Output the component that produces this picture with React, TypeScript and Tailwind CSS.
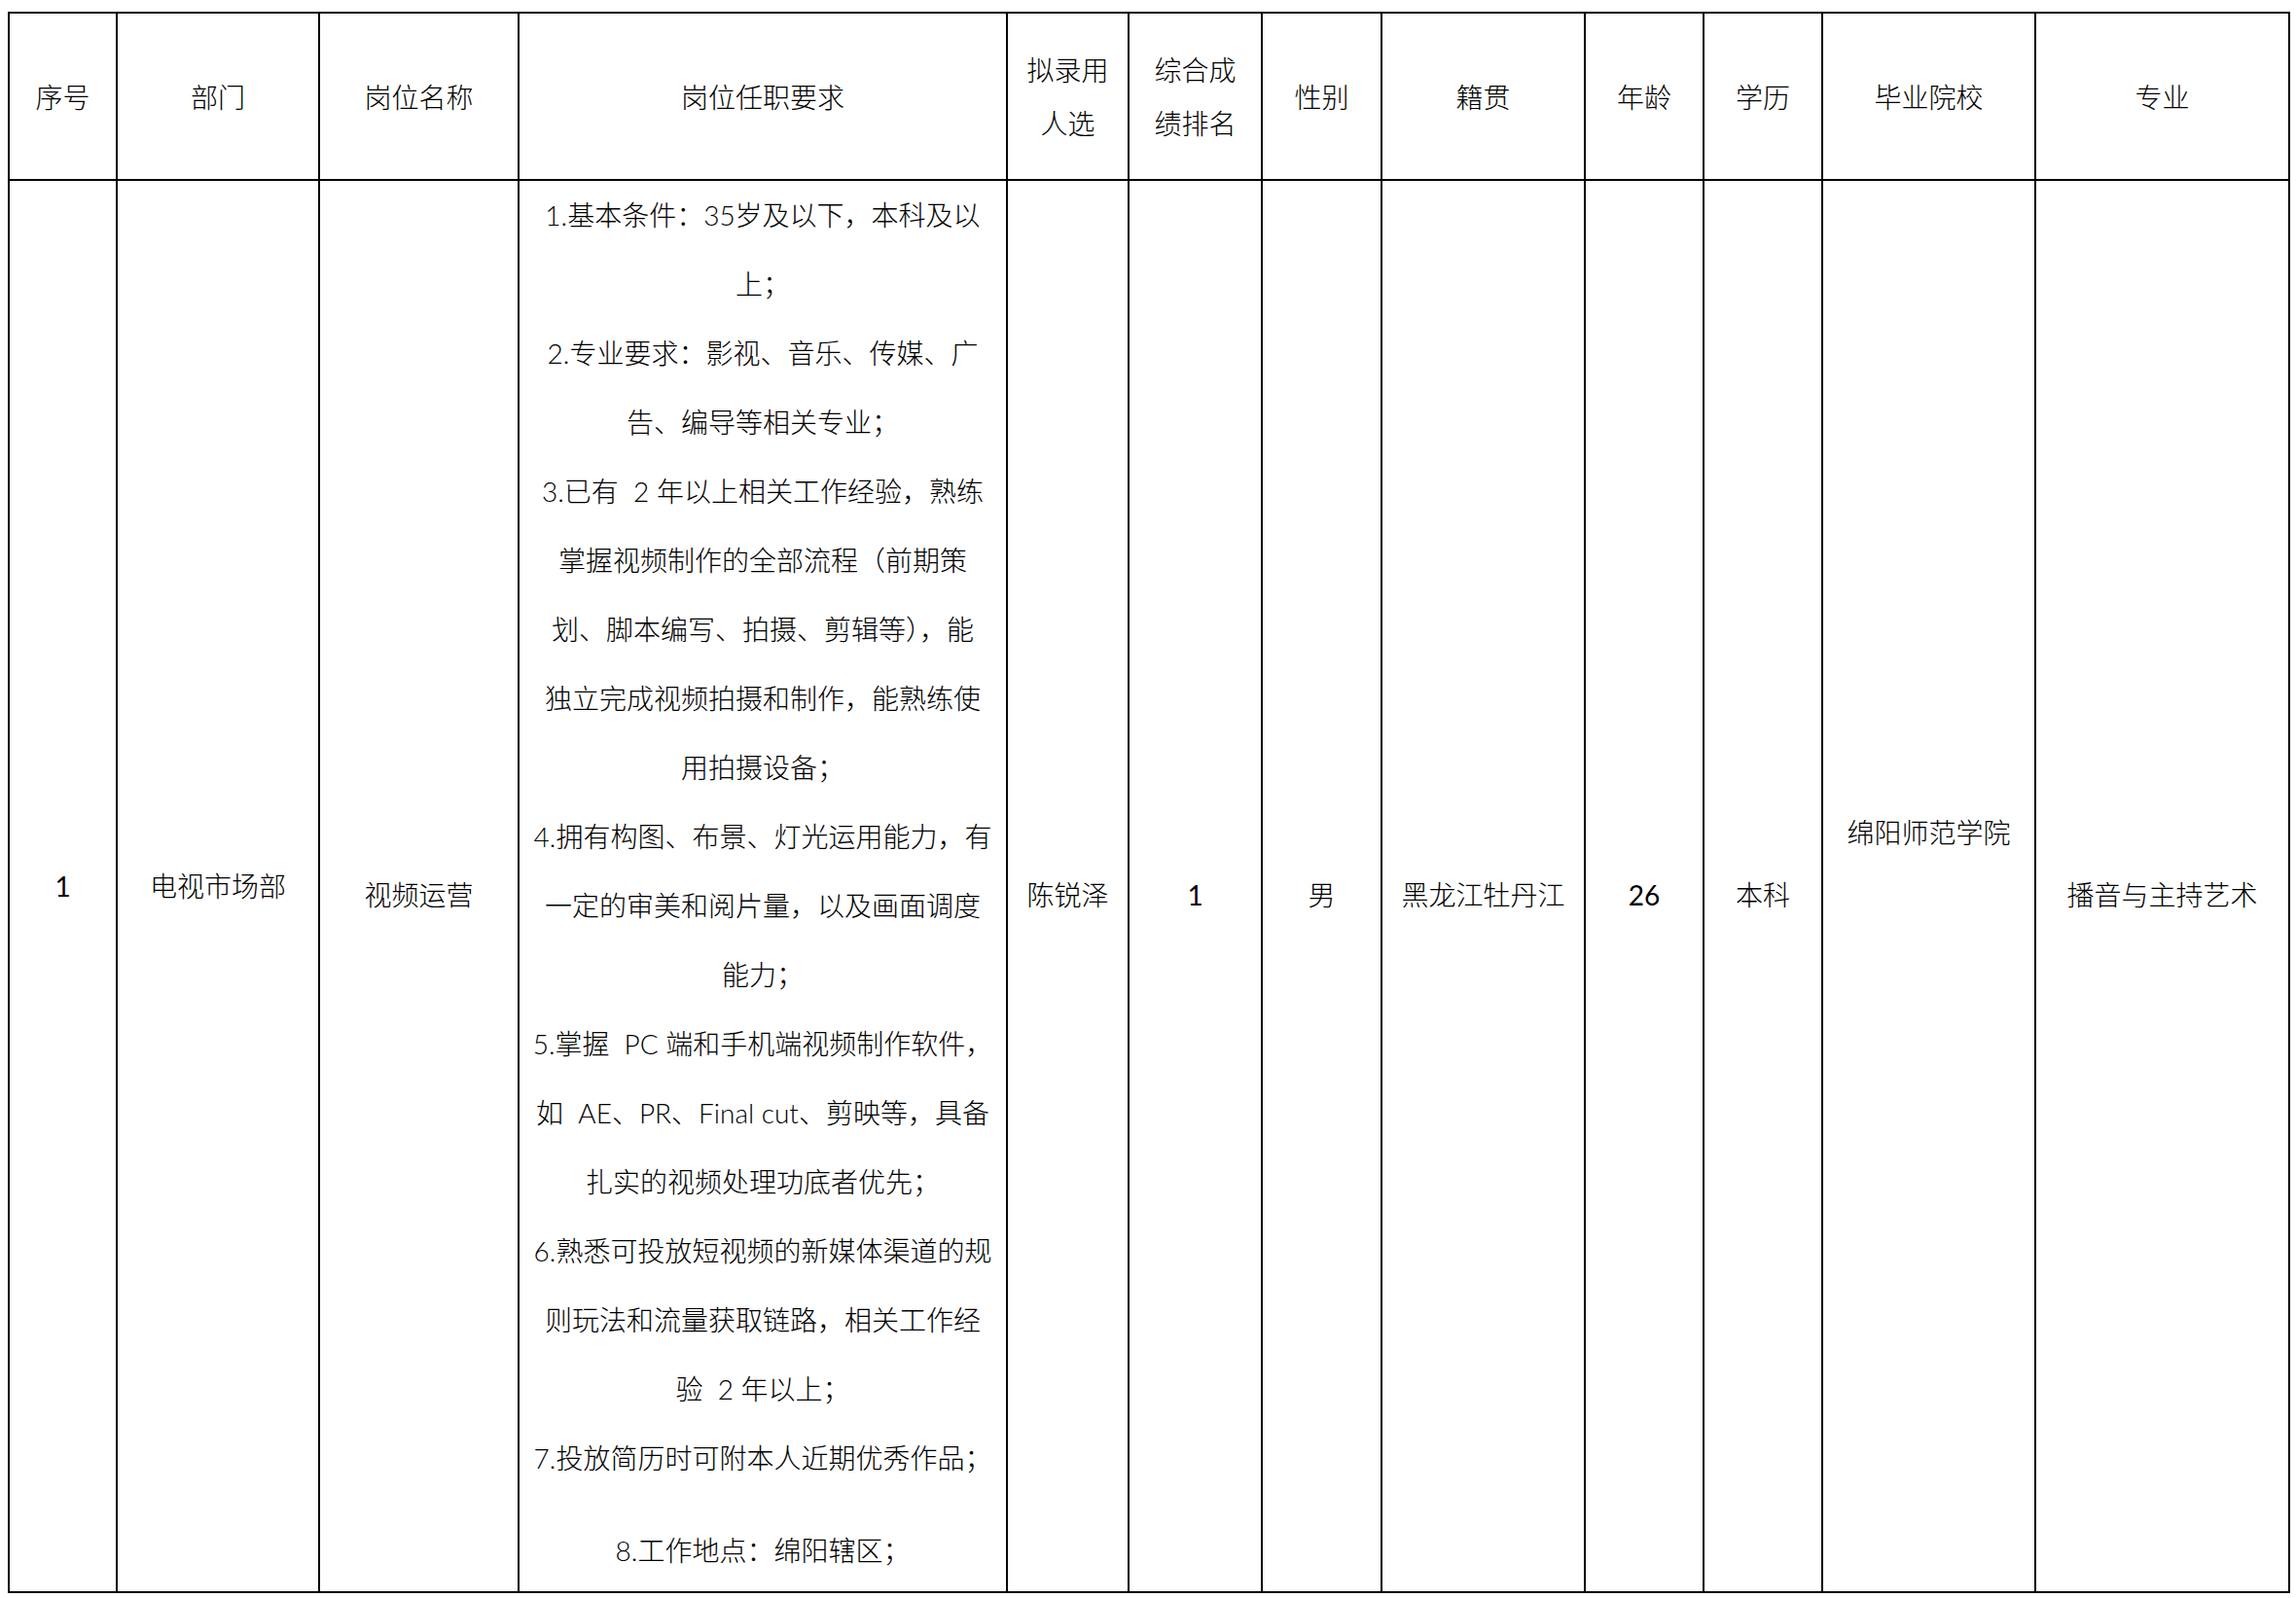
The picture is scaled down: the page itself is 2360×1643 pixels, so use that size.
import React from "react";

const reqLines: { text: string; extra?: boolean }[] = [
  { text: "1.基本条件：35岁及以下，本科及以" },
  { text: "上；" },
  { text: "2.专业要求：影视、音乐、传媒、广" },
  { text: "告、编导等相关专业；" },
  { text: "3.已有  2 年以上相关工作经验，熟练" },
  { text: "掌握视频制作的全部流程（前期策" },
  { text: "划、脚本编写、拍摄、剪辑等），能" },
  { text: "独立完成视频拍摄和制作，能熟练使" },
  { text: "用拍摄设备；" },
  { text: "4.拥有构图、布景、灯光运用能力，有" },
  { text: "一定的审美和阅片量，以及画面调度" },
  { text: "能力；" },
  { text: "5.掌握  PC 端和手机端视频制作软件，" },
  { text: "如  AE、PR、Final cut、剪映等，具备" },
  { text: "扎实的视频处理功底者优先；" },
  { text: "6.熟悉可投放短视频的新媒体渠道的规" },
  { text: "则玩法和流量获取链路，相关工作经" },
  { text: "验  2 年以上；" },
  { text: "7.投放简历时可附本人近期优秀作品；" },
  { text: "8.工作地点：绵阳辖区；", extra: true },
];

export default function App() {
  const th = "border-2 border-black align-middle text-center font-light p-0";
  const td = "border-2 border-black align-middle text-center p-0";

  return (
    <div className="min-h-screen bg-white pt-[12px] pl-[8px] text-black text-[28px] font-light [font-family:Lato,'Noto_Sans_CJK_SC',sans-serif]">
      <table className="table-fixed border-collapse w-[2346px]">
        <colgroup>
          <col className="w-[111px]" />
          <col className="w-[208px]" />
          <col className="w-[205px]" />
          <col className="w-[502px]" />
          <col className="w-[125px]" />
          <col className="w-[137px]" />
          <col className="w-[123px]" />
          <col className="w-[209px]" />
          <col className="w-[122px]" />
          <col className="w-[122px]" />
          <col className="w-[219px]" />
          <col className="w-[261px]" />
        </colgroup>
        <thead>
          {/* 表头 */}
          <tr className="h-[172px] leading-[55px] [font-family:'Noto_Sans_CJK_SC',sans-serif]">
            <th className={th}>序号</th>
            <th className={th}>部门</th>
            <th className={th}>岗位名称</th>
            <th className={th}>岗位任职要求</th>
            <th className={th}>
              拟录用
              <br />
              人选
            </th>
            <th className={th}>
              综合成
              <br />
              绩排名
            </th>
            <th className={th}>性别</th>
            <th className={th}>籍贯</th>
            <th className={th}>年龄</th>
            <th className={th}>学历</th>
            <th className={th}>毕业院校</th>
            <th className={th}>专业</th>
          </tr>
        </thead>
        <tbody>
          <tr className="h-[1452px]">
            <td className={`${td} font-normal`}>1</td>
            <td className={td}>电视市场部</td>
            <td className={`${td} pt-[18px]`}>视频运营</td>
            {/* 岗位任职要求 */}
            <td className="border-2 border-black align-top text-center p-0">
              <div className="flex flex-col leading-[71px] whitespace-pre">
                {reqLines.map((l, i) => (
                  <div key={i} className={l.extra ? "mt-[24px]" : ""}>
                    {l.text}
                  </div>
                ))}
              </div>
            </td>
            <td className={`${td} pt-[18px]`}>陈锐泽</td>
            <td className={`${td} pt-[18px] font-normal`}>1</td>
            <td className={`${td} pt-[18px]`}>男</td>
            <td className={`${td} pt-[18px]`}>黑龙江牡丹江</td>
            <td className={`${td} pt-[18px] font-normal`}>26</td>
            <td className={`${td} pt-[18px]`}>本科</td>
            <td className={`${td} pb-[111px]`}>绵阳师范学院</td>
            <td className={`${td} pt-[18px]`}>播音与主持艺术</td>
          </tr>
        </tbody>
      </table>
    </div>
  );
}
